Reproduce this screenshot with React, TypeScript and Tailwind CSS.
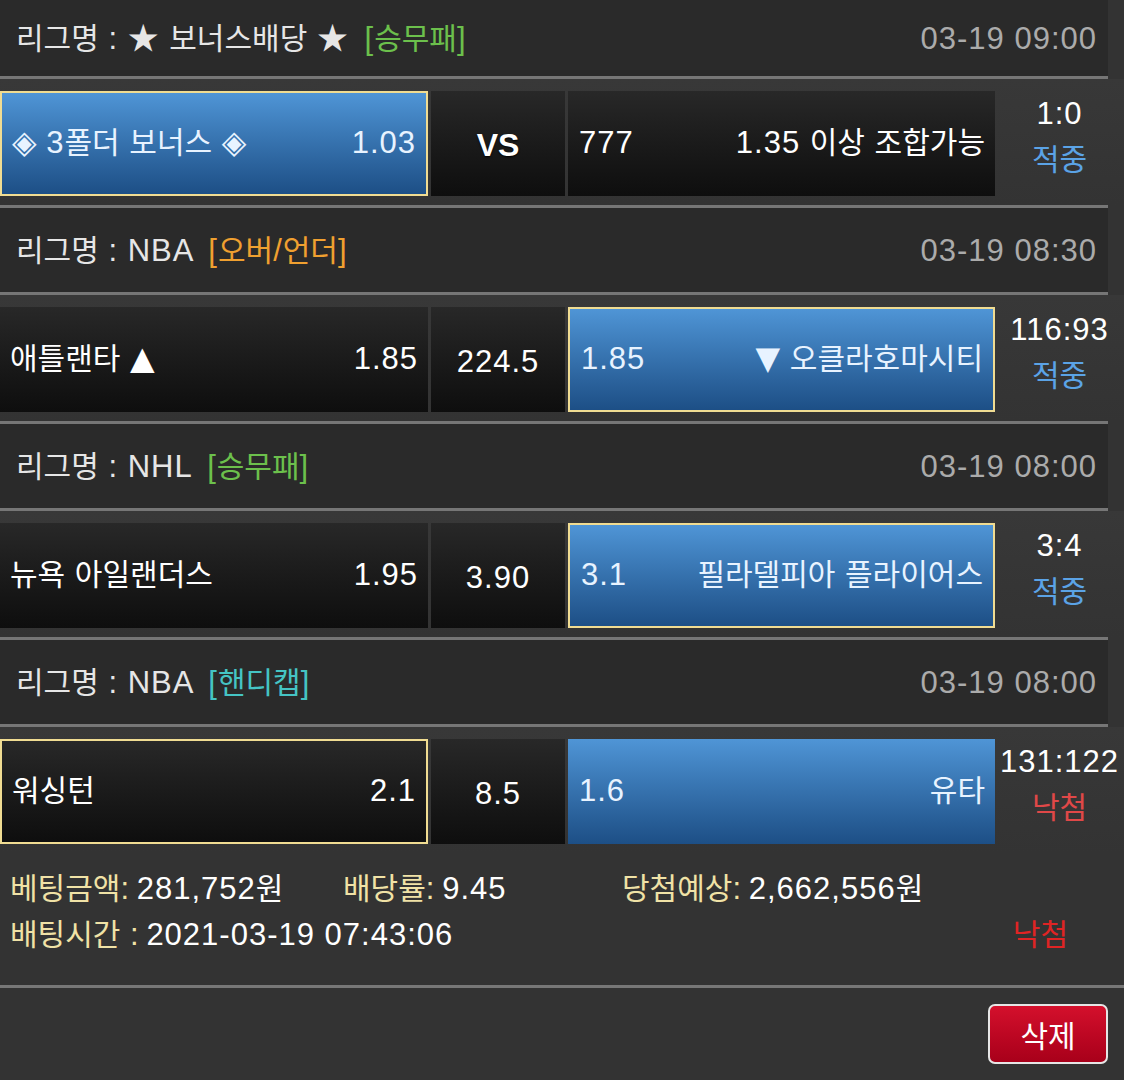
import React from "react";

const FONT = { fontFamily: '"Noto Sans CJK KR", "Noto Sans", sans-serif' };

function T({ children }: { children: string }) {
  const parts = children.split(/([\uAC00-\uD7A3]+|[◈▲▼])/);
  return (
    <>
      {parts.map((p, i) => {
        if (p === "") return null;
        if (/[\uAC00-\uD7A3]/.test(p)) return <span key={i}>{p}</span>;
        if (/[◈▲▼]/.test(p))
          return (
            <span key={i} className="leading-none text-[32px] [font-family:'DejaVu_Sans',sans-serif]">
              {p}
            </span>
          );
        return (
          <span key={i} className="leading-none text-[31px] tracking-[1px] [font-family:'Liberation_Sans','Noto_Sans_CJK_KR',sans-serif]">
            {p}
          </span>
        );
      })}
    </>
  );
}

function Header({ tag, tagColor, name, time, first }: { tag: string; tagColor: string; name: string; time: string; first?: boolean }) {
  return (
    <>
      <div className={`w-[1108px] ${first ? "h-[76px]" : "h-[84px]"} bg-[#2a2a2a] flex items-center justify-between pl-[16px] pr-[11px] pb-[4px]`}>
        <div className="text-[30px] text-[#e6e6e6] whitespace-nowrap">
          <T>{`리그명 : ${name} `}</T>
          <span className={`ml-[6px] ${tagColor}`}>
            <T>{`[${tag}]`}</T>
          </span>
        </div>
        <div className="text-[30px] text-[#ababab]">
          <T>{time}</T>
        </div>
      </div>
      <div className="w-[1108px] h-[3px] bg-[#767676]" />
    </>
  );
}

type CellKind = "dark" | "blue" | "blueBorder" | "darkBorder";

function cellClass(kind: CellKind) {
  const base = "h-[105px] pb-[6px] flex items-center justify-between text-[30px] whitespace-nowrap";
  switch (kind) {
    case "blue":
      return `${base} bg-gradient-to-b from-[#4f95d6] to-[#1d4f86] text-[#e8f3ff]`;
    case "blueBorder":
      return `${base} bg-gradient-to-b from-[#4f95d6] to-[#1d4f86] text-[#e8f3ff] border-2 border-[#f0dc92]`;
    case "darkBorder":
      return `${base} bg-gradient-to-b from-[#282828] to-[#0e0e0e] text-white border-2 border-[#f0dc92]`;
    default:
      return `${base} bg-gradient-to-b from-[#282828] to-[#0e0e0e] text-white`;
  }
}

function Row({
  left, leftOdd, leftKind, mid, midBold, rightOdd, right, rightKind, score, status, statusColor,
}: {
  left: string; leftOdd: string; leftKind: CellKind; mid: string; midBold?: boolean;
  rightOdd: string; right: string; rightKind: CellKind; score: string; status: string; statusColor: string;
}) {
  return (
    <>
      <div className="h-[126px] flex pt-[12px] bg-gradient-to-b from-[#383838] to-[#333333]">
        <div className={`w-[428px] pl-[10px] pr-[10px] ${cellClass(leftKind)}`}>
          <span><T>{left}</T></span>
          <span><T>{leftOdd}</T></span>
        </div>
        <div className={`w-[134px] ml-[3px] justify-center ${cellClass("dark")}`}>
          {midBold ? (
            <span className="mt-[8px] font-bold text-[32px] [font-family:'Liberation_Sans',Arial,sans-serif] [text-shadow:0_1px_2px_#000]">{mid}</span>
          ) : (
            <span className="mt-[6px]"><T>{mid}</T></span>
          )}
        </div>
        <div className={`w-[427px] ml-[3px] pl-[11px] pr-[10px] ${cellClass(rightKind)}`}>
          <span><T>{rightOdd}</T></span>
          <span><T>{right}</T></span>
        </div>
        <div className="w-[129px] -mt-[12px] pt-[9px] flex flex-col items-center text-[30px] leading-[46px] whitespace-nowrap">
          <span className="text-white"><T>{score}</T></span>
          <span className={statusColor}>{status}</span>
        </div>
      </div>
      <div className="w-[1108px] h-[3px] bg-[#767676]" />
    </>
  );
}

export default function App() {
  return (
    <div className="w-[1124px] h-[1080px] bg-[#333333] overflow-hidden" style={FONT}>
      <Header first name="★ 보너스배당 ★" tag="승무패" tagColor="text-[#6cc04c]" time="03-19 09:00" />
      <Row
        left="◈ 3폴더 보너스 ◈"
        leftOdd="1.03"
        leftKind="blueBorder"
        mid="VS"
        midBold
        rightOdd="777"
        right="1.35 이상 조합가능"
        rightKind="dark"
        score="1:0"
        status="적중"
        statusColor="text-[#5ba3e6]"
      />
      <Header name="NBA" tag="오버/언더" tagColor="text-[#f0a030]" time="03-19 08:30" />
      <Row
        left="애틀랜타 ▲"
        leftOdd="1.85"
        leftKind="dark"
        mid="224.5"
        rightOdd="1.85"
        right="▼ 오클라호마시티"
        rightKind="blueBorder"
        score="116:93"
        status="적중"
        statusColor="text-[#5ba3e6]"
      />
      <Header name="NHL" tag="승무패" tagColor="text-[#6cc04c]" time="03-19 08:00" />
      <Row
        left="뉴욕 아일랜더스"
        leftOdd="1.95"
        leftKind="dark"
        mid="3.90"
        rightOdd="3.1"
        right="필라델피아 플라이어스"
        rightKind="blueBorder"
        score="3:4"
        status="적중"
        statusColor="text-[#5ba3e6]"
      />
      <Header name="NBA" tag="핸디캡" tagColor="text-[#45c4c4]" time="03-19 08:00" />
      <div className="h-[126px] flex pt-[12px] bg-gradient-to-b from-[#383838] to-[#333333]">
        <div className={`w-[428px] pl-[10px] pr-[10px] ${cellClass("darkBorder")}`}>
          <span>워싱턴</span>
          <span><T>2.1</T></span>
        </div>
        <div className={`w-[134px] ml-[3px] justify-center ${cellClass("dark")}`}>
          <span className="mt-[6px]"><T>8.5</T></span>
        </div>
        <div className={`w-[427px] ml-[3px] pl-[11px] pr-[10px] ${cellClass("blue")}`}>
          <span><T>1.6</T></span>
          <span>유타</span>
        </div>
        <div className="w-[129px] -mt-[12px] pt-[9px] flex flex-col items-center text-[30px] leading-[46px] whitespace-nowrap">
          <span className="text-white"><T>131:122</T></span>
          <span className="text-[#e04848]">낙첨</span>
        </div>
      </div>
      <div className="h-[132px] pt-[10px] pl-[10px] pr-[56px] text-[30px] leading-[46px] whitespace-nowrap">
        <div className="grid grid-cols-[333px_279px_auto]">
          <span><span className="text-[#f0e2a6]"><T>베팅금액:</T></span> <span className="text-white"><T>281,752원</T></span></span>
          <span><span className="text-[#f0e2a6]"><T>배당률:</T></span> <span className="text-white"><T>9.45</T></span></span>
          <span><span className="text-[#f0e2a6]"><T>당첨예상:</T></span> <span className="text-white"><T>2,662,556원</T></span></span>
        </div>
        <div className="flex justify-between">
          <span><span className="text-[#f0e2a6]"><T>배팅시간 :</T></span> <span className="text-white"><T>2021-03-19 07:43:06</T></span></span>
          <span className="text-[#e02424]">낙첨</span>
        </div>
      </div>
      <div className="w-full h-[3px] bg-[#777777]" />
      <div className="flex justify-end pr-[16px] pt-[16px]">
        <button className="w-[120px] h-[60px] rounded-[7px] border-2 border-[#e6e6e6] bg-gradient-to-b from-[#d4102c] to-[#a8001a] text-white text-[30px] flex items-center justify-center">
          삭제
        </button>
      </div>
    </div>
  );
}
